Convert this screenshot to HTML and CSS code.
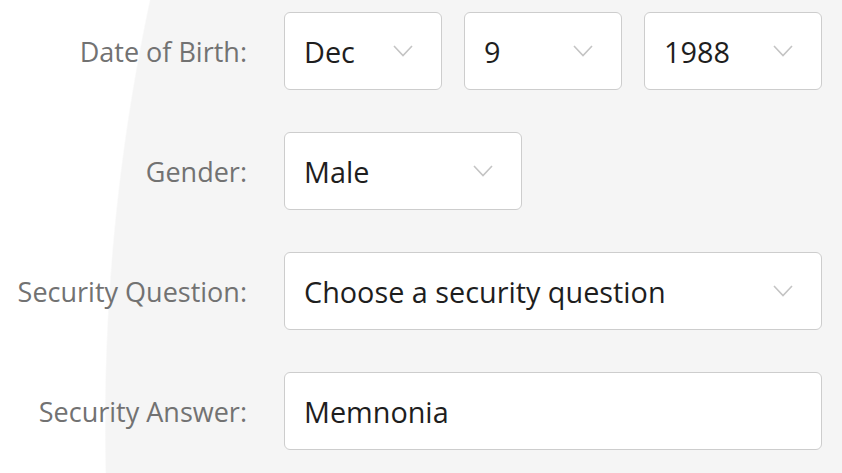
FILE: index.html
```html
<!DOCTYPE html>
<html lang="en">
<head>
<meta charset="utf-8">
<title>Profile</title>
<link rel="stylesheet" href="styles.css">
</head>
<body>
<form class="form">
  <label class="label">Date of Birth:</label>
  <div class="dob">
    <div class="field w-month"><span class="value">Dec</span><svg class="chev" viewBox="0 0 20 12"><path d="M1 1 L10 10.5 L19 1"/></svg></div>
    <div class="field w-day"><span class="value">9</span><svg class="chev" viewBox="0 0 20 12"><path d="M1 1 L10 10.5 L19 1"/></svg></div>
    <div class="field w-year"><span class="value">1988</span><svg class="chev" viewBox="0 0 20 12"><path d="M1 1 L10 10.5 L19 1"/></svg></div>
  </div>

  <label class="label">Gender:</label>
  <div class="row">
    <div class="field w-gender"><span class="value">Male</span><svg class="chev" viewBox="0 0 20 12"><path d="M1 1 L10 10.5 L19 1"/></svg></div>
  </div>

  <label class="label">Security Question:</label>
  <div class="field"><span class="value">Choose a security question</span><svg class="chev" viewBox="0 0 20 12"><path d="M1 1 L10 10.5 L19 1"/></svg></div>

  <label class="label">Security Answer:</label>
  <div class="field"><span class="value">Memnonia</span></div>
</form>
</body>
</html>
```
FILE: styles.css
```css
html, body {
  margin: 0;
  padding: 0;
  height: 100%;
}
body {
  font-family: "Open Sans", "Noto Sans", sans-serif;
  background: radial-gradient(circle 2027px at 2132px 424px, #f5f5f5 2026px, #ffffff 2027.5px);
  overflow: hidden;
}
.form {
  display: grid;
  grid-template-columns: 247px 538px;
  column-gap: 37px;
  row-gap: 42px;
  padding-top: 12px;
}
.label {
  align-self: center;
  text-align: right;
  white-space: nowrap;
  font-size: 27px;
  font-weight: 400;
  color: #727272;
}
.dob {
  display: flex;
  gap: 22px;
}
.row {
  display: flex;
}
.field {
  box-sizing: border-box;
  height: 78px;
  background: #ffffff;
  border: 1.5px solid #cdcdcd;
  border-radius: 6px;
  display: flex;
  align-items: center;
  justify-content: space-between;
  padding: 0 28px 0 19px;
}
.value {
  font-size: 28.8px;
  font-weight: 400;
  color: #1e1e1e;
  white-space: nowrap;
}
.chev {
  width: 20px;
  height: 12px;
  fill: none;
  stroke: #c4c4c4;
  stroke-width: 1.6;
  flex: none;
}
.w-month, .w-day { width: 158px; }
.w-year { width: 178px; }
.w-gender { width: 238px; }
```
